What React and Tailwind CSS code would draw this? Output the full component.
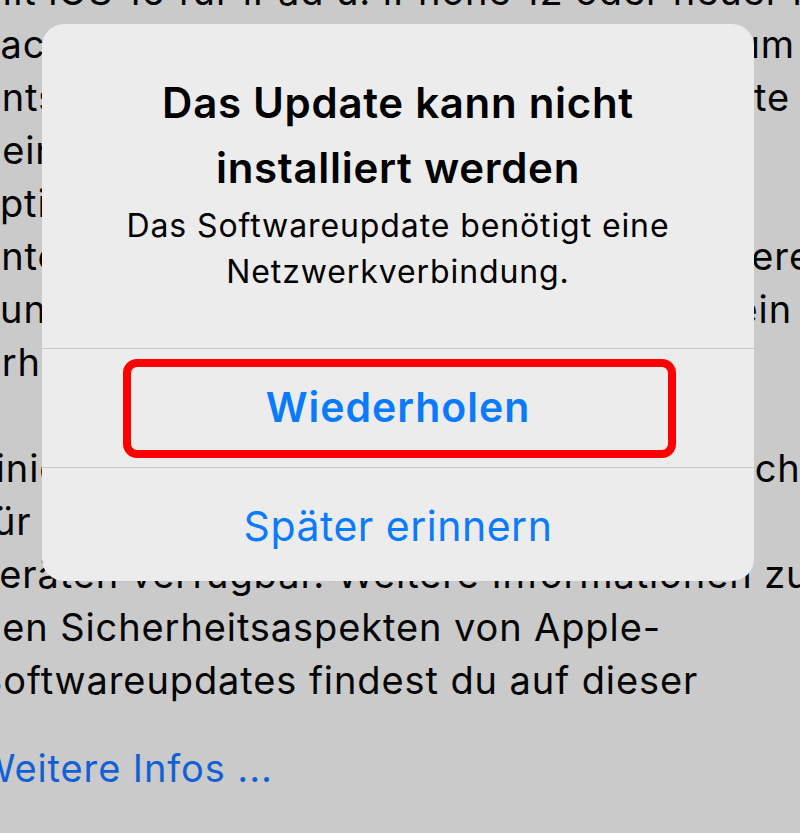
import React from "react";

const FONT = { fontFamily: "Inter, 'Noto Sans', sans-serif" };

function Line({ left, right, leftClass = "", rightClass = "" }) {
  return (
    <div className="flex justify-between whitespace-nowrap">
      <span className={leftClass}>{left}</span>
      <span className={rightClass}>{right}</span>
    </div>
  );
}

export default function App() {
  return (
    <div
      className="relative w-[800px] h-[833px] overflow-hidden bg-[#cacaca] text-[#050505]"
      style={FONT}
    >
      {/* page content behind the alert */}
      <div className="ml-[-22px] mt-[-35px] w-[822px] text-[38px] leading-[53px] tracking-[0.9px]">
        <div className="whitespace-nowrap">Mit iOS 16 für iPad u. iPhone 12 oder neuer kann</div>
        <Line left="Face ID" right="um" rightClass="mr-[5px]" />
        <Line left="Entsperren" right="Inhalte" rightClass="mr-[10px]" />
        <Line left="deinem" right="" />
        <Line left="Optionen" leftClass="ml-[-8px]" right="" />
        <Line left="Unterstützt" leftClass="ml-[-6px]" right="mehrere" rightClass="mr-[-12px]" />
        <Line left="Funktionen" right="ein" rightClass="mr-[8px]" />
        <Line left="Erholung" right="" />
        <div className="h-[53px]" />
        <Line left="Einige" leftClass="ml-[-6px]" right="nicht" rightClass="mr-[-14px]" />
        <Line left="für alle" right="" />
        <div className="ml-[-8px] whitespace-nowrap">Geräten verfügbar. Weitere Informationen zu</div>
        <div className="whitespace-nowrap">den Sicherheitsaspekten von Apple-</div>
        <div className="whitespace-nowrap">Softwareupdates findest du auf dieser</div>
        <div className="mt-[35px] whitespace-nowrap text-[#1260d6]">Weitere Infos ...</div>
      </div>

      {/* alert */}
      <div className="absolute left-[42px] top-[24px] w-[712px] flex flex-col rounded-[22px] bg-[#ececec] overflow-hidden">
        <div className="h-[324px] flex flex-col items-center pt-[46px] text-center">
          <div className="text-[42px] leading-[65px] font-semibold tracking-[0.7px] text-black">
            Das Update kann nicht
            <br />
            installiert werden
          </div>
          <div className="mt-[3px] text-[32px] leading-[46px] tracking-[0.9px] text-black">
            Das Softwareupdate benötigt eine
            <br />
            Netzwerkverbindung.
          </div>
        </div>
        <div className="h-px bg-[#c9c9c9]" />
        <div className="relative h-[118px] flex items-center justify-center text-[41px] font-semibold tracking-[1px] text-[#0a7aff]">
          Wiederholen
          <div className="absolute left-[81px] top-[10px] w-[553px] h-[99px] rounded-[14px] border-[8px] border-[#ff0000]" />
        </div>
        <div className="h-px bg-[#c9c9c9]" />
        <div className="h-[113px] flex items-center justify-center pt-[5px] text-[41px] tracking-[0.5px] text-[#0a7aff]">
          Später erinnern
        </div>
      </div>
    </div>
  );
}
